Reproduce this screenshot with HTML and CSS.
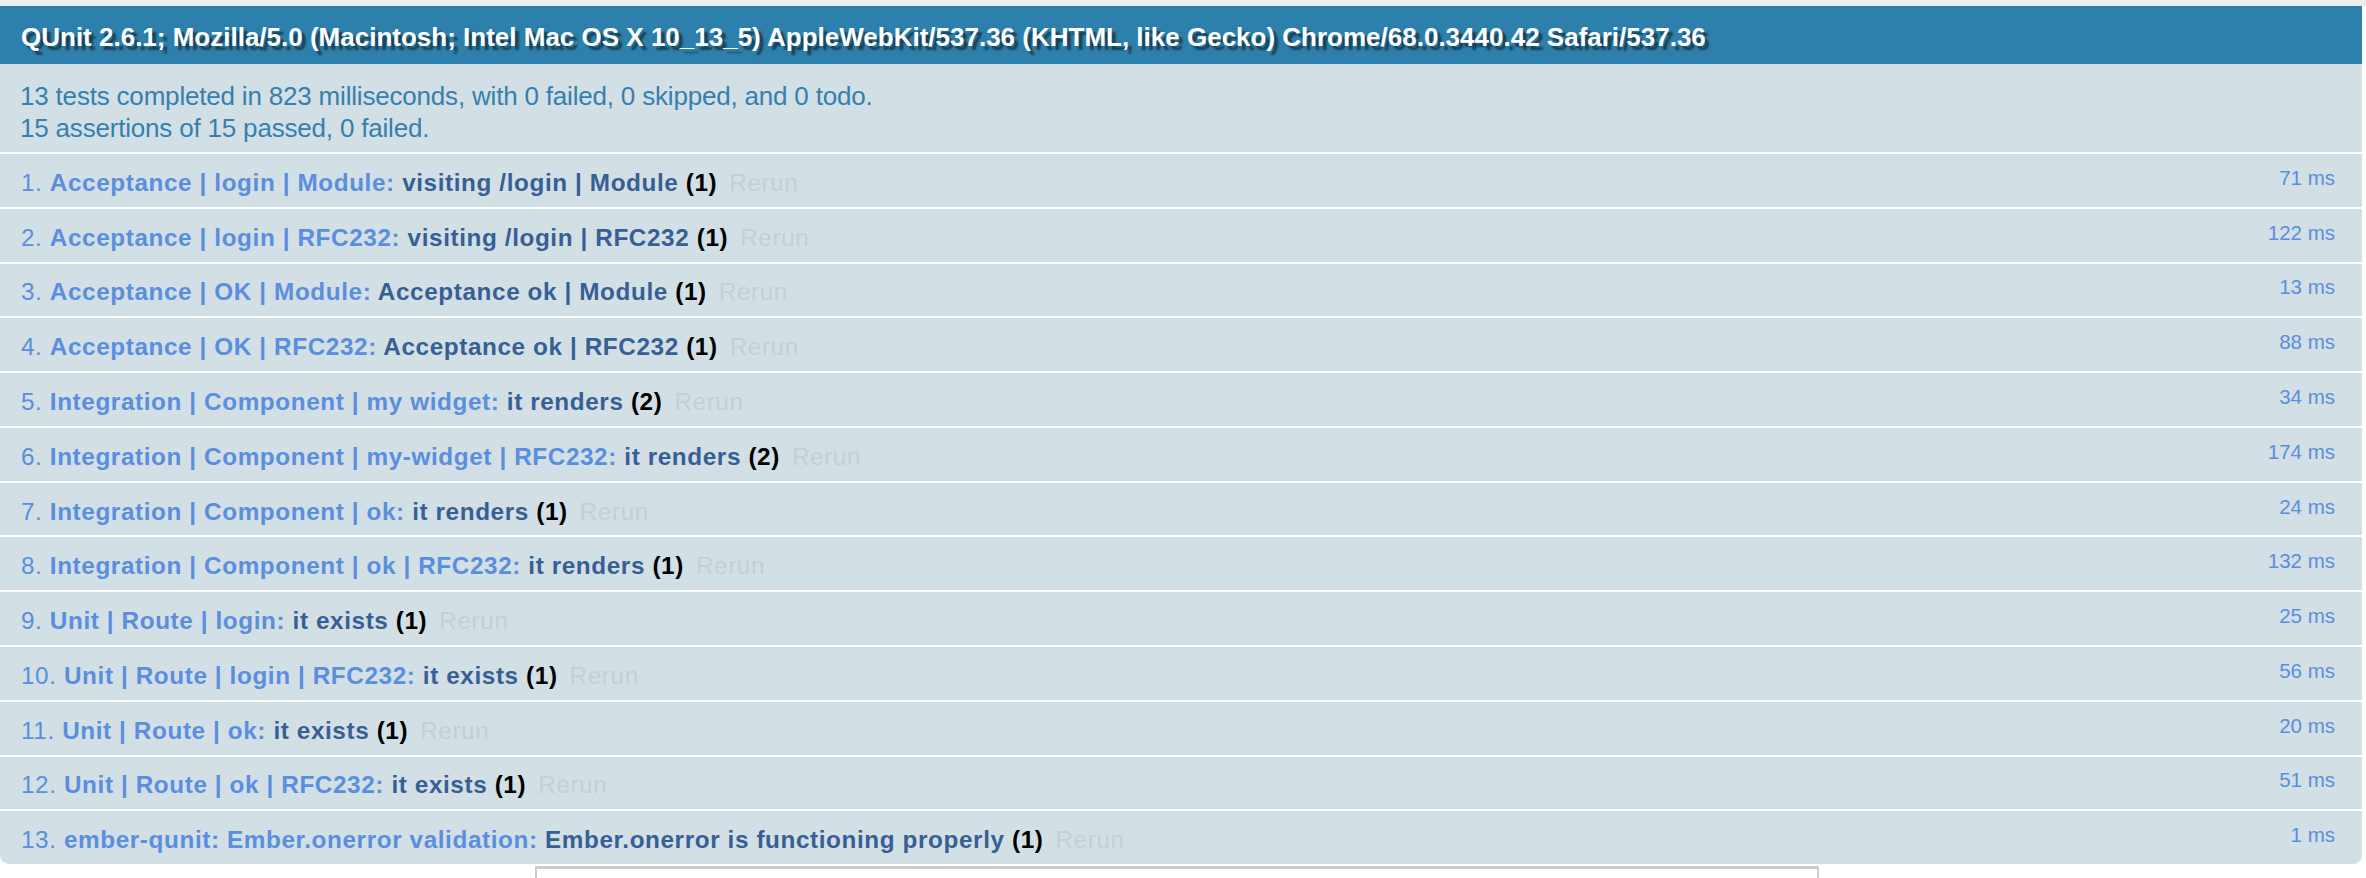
FILE: index.html
```html
<!DOCTYPE html>
<html>
<head>
<meta charset="utf-8">
<title>Tests</title>
<link rel="stylesheet" href="styles.css">
</head>
<body>
<div class="topband"></div>
<div class="qunit">
  <h2 class="user-agent">QUnit 2.6.1; Mozilla/5.0 (Macintosh; Intel Mac OS X 10_13_5) AppleWebKit/537.36 (KHTML, like Gecko) Chrome/68.0.3440.42 Safari/537.36</h2>
  <p class="test-result">13 tests completed in 823 milliseconds, with 0 failed, 0 skipped, and 0 todo.<br>15 assertions of 15 passed, 0 failed.</p>
  <ol class="tests">
    <li class="pass"><strong><span class="module-name">Acceptance | login | Module</span>: <span class="test-name">visiting /login | Module</span> <b class="counts">(1)</b></strong><a class="rerun" href="#">Rerun</a><span class="runtime">71 ms</span></li>
    <li class="pass"><strong><span class="module-name">Acceptance | login | RFC232</span>: <span class="test-name">visiting /login | RFC232</span> <b class="counts">(1)</b></strong><a class="rerun" href="#">Rerun</a><span class="runtime">122 ms</span></li>
    <li class="pass"><strong><span class="module-name">Acceptance | OK | Module</span>: <span class="test-name">Acceptance ok | Module</span> <b class="counts">(1)</b></strong><a class="rerun" href="#">Rerun</a><span class="runtime">13 ms</span></li>
    <li class="pass"><strong><span class="module-name">Acceptance | OK | RFC232</span>: <span class="test-name">Acceptance ok | RFC232</span> <b class="counts">(1)</b></strong><a class="rerun" href="#">Rerun</a><span class="runtime">88 ms</span></li>
    <li class="pass"><strong><span class="module-name">Integration | Component | my widget</span>: <span class="test-name">it renders</span> <b class="counts">(2)</b></strong><a class="rerun" href="#">Rerun</a><span class="runtime">34 ms</span></li>
    <li class="pass"><strong><span class="module-name">Integration | Component | my-widget | RFC232</span>: <span class="test-name">it renders</span> <b class="counts">(2)</b></strong><a class="rerun" href="#">Rerun</a><span class="runtime">174 ms</span></li>
    <li class="pass"><strong><span class="module-name">Integration | Component | ok</span>: <span class="test-name">it renders</span> <b class="counts">(1)</b></strong><a class="rerun" href="#">Rerun</a><span class="runtime">24 ms</span></li>
    <li class="pass"><strong><span class="module-name">Integration | Component | ok | RFC232</span>: <span class="test-name">it renders</span> <b class="counts">(1)</b></strong><a class="rerun" href="#">Rerun</a><span class="runtime">132 ms</span></li>
    <li class="pass"><strong><span class="module-name">Unit | Route | login</span>: <span class="test-name">it exists</span> <b class="counts">(1)</b></strong><a class="rerun" href="#">Rerun</a><span class="runtime">25 ms</span></li>
    <li class="pass"><strong><span class="module-name">Unit | Route | login | RFC232</span>: <span class="test-name">it exists</span> <b class="counts">(1)</b></strong><a class="rerun" href="#">Rerun</a><span class="runtime">56 ms</span></li>
    <li class="pass"><strong><span class="module-name">Unit | Route | ok</span>: <span class="test-name">it exists</span> <b class="counts">(1)</b></strong><a class="rerun" href="#">Rerun</a><span class="runtime">20 ms</span></li>
    <li class="pass"><strong><span class="module-name">Unit | Route | ok | RFC232</span>: <span class="test-name">it exists</span> <b class="counts">(1)</b></strong><a class="rerun" href="#">Rerun</a><span class="runtime">51 ms</span></li>
    <li class="pass"><strong><span class="module-name">ember-qunit: Ember.onerror validation</span>: <span class="test-name">Ember.onerror is functioning properly</span> <b class="counts">(1)</b></strong><a class="rerun" href="#">Rerun</a><span class="runtime">1 ms</span></li>
  </ol>
</div>
<div class="testing-container"></div>
</body>
</html>
```
FILE: styles.css
```css
html, body {
  margin: 0;
  padding: 0;
  background: #ffffff;
}
body {
  font-family: "Liberation Sans", Arial, sans-serif;
}
.topband {
  height: 6px;
  background: #eeeeee;
}
.qunit {
  margin-right: 4px;
}
.user-agent {
  margin: 0;
  padding: 15px 22px 11px 21px;
  background-color: #2d80ac;
  color: #ffffff;
  font-size: 26px;
  line-height: 32px;
  font-weight: bold;
  text-shadow: rgba(0, 0, 0, 0.5) 4px 4px 2px;
  white-space: nowrap;
}
.test-result {
  margin: 0;
  padding: 15.7px 22px 8.3px 20px;
  color: #3580ad;
  background-color: #d2dfe5;
  border-bottom: 2px solid #ffffff;
  font-size: 26px;
  line-height: 32px;
  letter-spacing: -0.19px;
}
.tests {
  margin: 0;
  padding: 0;
  list-style-position: inside;
  font-size: 24.3px;
  letter-spacing: 0.6px;
}
.tests li {
  padding: 13.9px 27px 8.9px 21px;
  line-height: 30px;
  border-bottom: 2px solid #ffffff;
  color: #5a8edf;
  background-color: #d2dfe5;
  white-space: nowrap;
}
.tests li:last-child {
  border-radius: 0 0 10px 10px;
}
.module-name {
  color: #5a8edf;
}
.test-name {
  color: #375f95;
}
.counts {
  color: #000000;
}
.rerun {
  padding-left: 12px;
  color: #c6cfd3;
  text-decoration: none;
  font-weight: normal;
}
.runtime {
  float: right;
  font-size: 20.5px;
  line-height: 20px;
  letter-spacing: 0;
  color: #5a8edf;
}
.testing-container {
  width: 1280px;
  height: 768px;
  margin-top: 0;
  margin-left: 535px;
  border: 2px solid #cccccc;
  border-top-width: 3px;
}
```
